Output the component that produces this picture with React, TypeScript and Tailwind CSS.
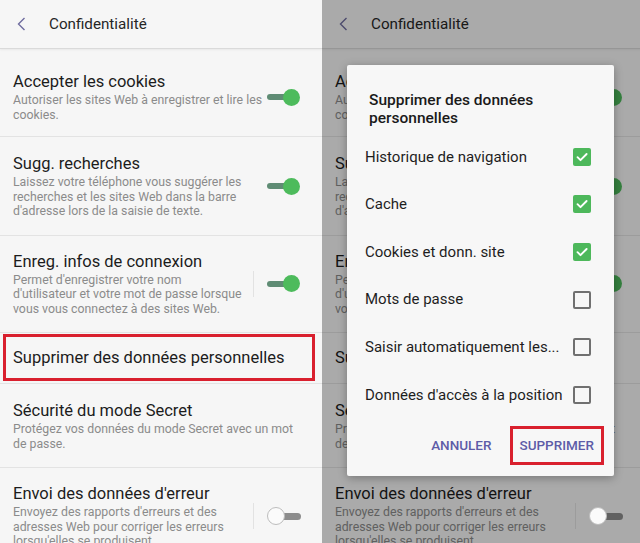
import React from 'react';

type RowProps = {
  title: string;
  lines?: string[];
  toggle?: 'on' | 'off';
  divider?: boolean;
  pad: string;
  children?: React.ReactNode;
};

const Toggle = ({ on }: { on: boolean }) =>
  on ? (
    <div className="flex items-center w-[34px]">
      <div className="w-[20px] h-[6px] rounded-full bg-[#5f8c74]" />
      <div className="-ml-[4px] w-[17px] h-[17px] rounded-full bg-[#4dbb5c]" />
    </div>
  ) : (
    <div className="flex items-center w-[34px]">
      <div className="relative z-10 w-[18px] h-[18px] rounded-full bg-[#fbfbfb] border border-[#bdbdbd]" />
      <div className="-ml-[3px] w-[19px] h-[7px] rounded-r-full bg-[#8d8d8d]" />
    </div>
  );

const Row = ({ title, lines, toggle, divider, pad, children }: RowProps) => (
  <div className={`relative flex items-center border-b border-[#e3e3e3] pl-[13px] pr-[21px] ${pad}`}>
    <div className="flex-1 min-w-0">
      <div className="text-[16.5px] leading-[20px] text-[#1c1c1c] whitespace-nowrap">{title}</div>
      {lines && (
        <div className="mt-[1px] text-[12.3px] leading-[14.5px] text-[#8b8b8b]">
          {lines.map((l) => (
            <div key={l} className="whitespace-nowrap">
              {l}
            </div>
          ))}
        </div>
      )}
    </div>
    {toggle && (
      <div className="flex items-center shrink-0">
        <div className={`w-px h-[26px] ${divider ? 'bg-[#e2e2e2]' : 'bg-transparent'}`} />
        <div className="ml-[13px]">
          <Toggle on={toggle === 'on'} />
        </div>
      </div>
    )}
    {children}
  </div>
);

const SettingsScreen = ({ highlight }: { highlight?: boolean }) => (
  <div className="w-[322px] h-[543px] shrink-0 bg-[#f6f6f6] overflow-hidden">
    <header className="h-[49px] flex items-center pl-[17px] border-b border-[#dadada] shadow-[0_1px_2px_rgba(0,0,0,0.06)]">
      <svg width="9" height="14" viewBox="0 0 9 14" fill="none">
        <polyline points="7.5,1 1.5,7 7.5,13" stroke="#6f6d9f" strokeWidth="1.4" />
      </svg>
      <div className="ml-[23px] text-[15.2px] text-[#262626]">Confidentialité</div>
    </header>
    <Row
      pad="pt-[23px] pb-[14px]"
      title="Accepter les cookies"
      lines={['Autoriser les sites Web à enregistrer et lire les', 'cookies.']}
      toggle="on"
    />
    <Row
      pad="pt-[17px] pb-[16px]"
      title="Sugg. recherches"
      lines={[
        'Laissez votre téléphone vous suggérer les',
        'recherches et les sites Web dans la barre',
        "d'adresse lors de la saisie de texte.",
      ]}
      toggle="on"
    />
    <Row
      pad="pt-[16px] pb-[16px]"
      title="Enreg. infos de connexion"
      lines={[
        "Permet d'enregistrer votre nom",
        "d'utilisateur et votre mot de passe lorsque",
        'vous vous connectez à des sites Web.',
      ]}
      toggle="on"
      divider
    />
    <Row pad="pt-[15px] pb-[15px]" title="Supprimer des données personnelles">
      {highlight && (
        <div className="absolute left-[3px] right-[7px] top-[1px] bottom-[2px] border-[3px] border-[#d9202e]" />
      )}
    </Row>
    <Row
      pad="pt-[17px] pb-[16px]"
      title="Sécurité du mode Secret"
      lines={['Protégez vos données du mode Secret avec un mot', 'de passe.']}
    />
    <Row
      pad="pt-[16px] pb-[16px]"
      title="Envoi des données d'erreur"
      lines={[
        "Envoyez des rapports d'erreurs et des",
        'adresses Web pour corriger les erreurs',
        "lorsqu'elles se produisent.",
      ]}
      toggle="off"
      divider
    />
  </div>
);

const Checkbox = ({ checked }: { checked: boolean }) =>
  checked ? (
    <div className="w-[18px] h-[18px] rounded-[2px] bg-[#4db85b] flex items-center justify-center">
      <svg width="14" height="14" viewBox="0 0 14 14" fill="none">
        <path d="M2.5 7.2l3 3L11.6 4" stroke="#fff" strokeWidth="1.9" strokeLinecap="round" strokeLinejoin="round" />
      </svg>
    </div>
  ) : (
    <div className="w-[18px] h-[18px] rounded-[2px] border-2 border-[#707070]" />
  );

const items = [
  { label: 'Historique de navigation', checked: true },
  { label: 'Cache', checked: true },
  { label: 'Cookies et donn. site', checked: true },
  { label: 'Mots de passe', checked: false },
  { label: 'Saisir automatiquement les...', checked: false },
  { label: "Données d'accès à la position", checked: false },
];

const App = () => {
  return (
    <div className="flex w-[640px] h-[543px] overflow-hidden" style={{ fontFamily: 'Roboto, "Noto Sans", sans-serif' }}>
      <SettingsScreen highlight />
      <div className="relative w-[318px] h-[543px] overflow-hidden">
        <SettingsScreen />
        <div className="absolute inset-0 bg-black/[0.31]" />
        <div className="absolute left-[25px] top-[65px] w-[267px] rounded-[2px] bg-[#f7f7f7] shadow-[0_2px_10px_rgba(0,0,0,0.3)] pt-[26px] pb-[11px]">
          <div className="pl-[22px] text-[15.5px] leading-[18px] font-medium text-[#1a1a1a]">
            Supprimer des données
            <br />
            personnelles
          </div>
          <div className="mt-[6px]">
            {items.map((it) => (
              <div key={it.label} className="flex items-center h-[47.6px] pl-[18px] pr-[23px]">
                <span className="flex-1 text-[15px] text-[#1e1e1e] whitespace-nowrap">{it.label}</span>
                <Checkbox checked={it.checked} />
              </div>
            ))}
          </div>
          <div className="mt-[7px] flex justify-end gap-[8px] pr-[10px]">
            <button className="h-[39px] px-[7px] border-[3px] border-transparent text-[13.5px] font-medium text-[#5e5ca8]">
              ANNULER
            </button>
            <button className="h-[39px] px-[7px] border-[3px] border-[#d9202e] text-[13.5px] font-medium text-[#5e5ca8]">
              SUPPRIMER
            </button>
          </div>
        </div>
      </div>
    </div>
  );
};

export default App;
